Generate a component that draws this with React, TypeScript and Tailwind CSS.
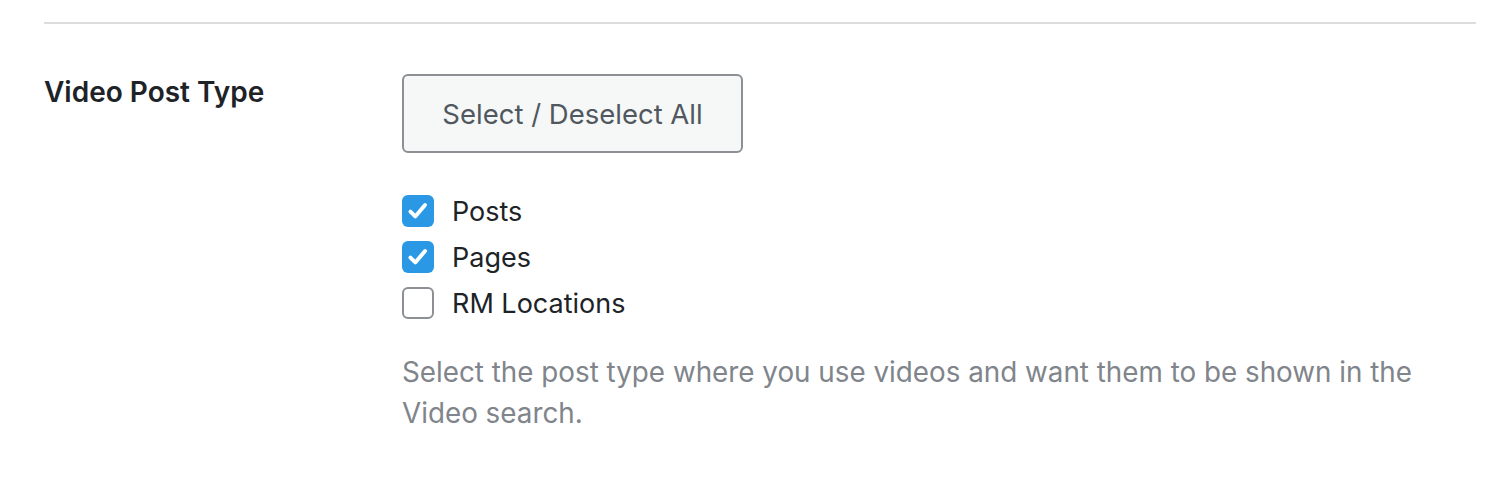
import { useState } from 'react';

interface PostType {
  key: string;
  label: string;
}

const postTypes: PostType[] = [
  { key: 'post', label: 'Posts' },
  { key: 'page', label: 'Pages' },
  { key: 'rm_location', label: 'RM Locations' },
];

function CheckIcon() {
  return (
    <svg width="26" height="26" viewBox="0 0 24 24" fill="none" stroke="white" strokeWidth="3.6" strokeLinecap="round" strokeLinejoin="round">
      <polyline points="5 12.5 9.5 17 18.5 6.5" />
    </svg>
  );
}

export default function App() {
  const [checked, setChecked] = useState<Record<string, boolean>>({
    post: true,
    page: true,
    rm_location: false,
  });

  const toggleAll = () => {
    const allOn = postTypes.every((p) => checked[p.key]);
    const next: Record<string, boolean> = {};
    postTypes.forEach((p) => (next[p.key] = !allOn));
    setChecked(next);
  };

  return (
    <div className="w-full min-h-[491px] bg-white pl-[44px] pr-[24px] pt-[22px] font-['Inter',sans-serif]">
      <div className="h-[2px] bg-[#dcdcde]" />
      <div className="flex mt-[50px]">
        <div className="w-[358px] shrink-0 text-[28px] leading-[36px] font-semibold text-[#1d2327]">
          Video Post Type
        </div>
        <div className="flex flex-col">
          <button
            type="button"
            onClick={toggleAll}
            className="w-[341px] h-[79px] pt-[3px] flex items-center justify-center border-2 border-[#8c8f94] rounded-[6px] bg-[#f6f7f7] text-[27.5px] text-[#50575e]"
          >
            Select / Deselect All
          </button>
          <div className="mt-[35px] flex flex-col">
            {postTypes.map((p) => (
              <label key={p.key} className="flex items-center h-[46px] cursor-pointer">
                <input
                  type="checkbox"
                  className="sr-only"
                  checked={!!checked[p.key]}
                  onChange={() => setChecked({ ...checked, [p.key]: !checked[p.key] })}
                />
                {checked[p.key] ? (
                  <span className="w-[32px] h-[32px] rounded-[6px] bg-[#2a98e4] flex items-center justify-center">
                    <CheckIcon />
                  </span>
                ) : (
                  <span className="w-[32px] h-[32px] rounded-[6px] border-2 border-[#8c8f94] bg-white" />
                )}
                <span className="ml-[18px] pt-[2px] text-[27px] text-[#1d2327]">{p.label}</span>
              </label>
            ))}
          </div>
          <p className="mt-[26px] w-[1030px] text-[27.8px] leading-[41px] text-[#80858b]">
            Select the post type where you use videos and want them to be shown in the Video search.
          </p>
        </div>
      </div>
    </div>
  );
}
